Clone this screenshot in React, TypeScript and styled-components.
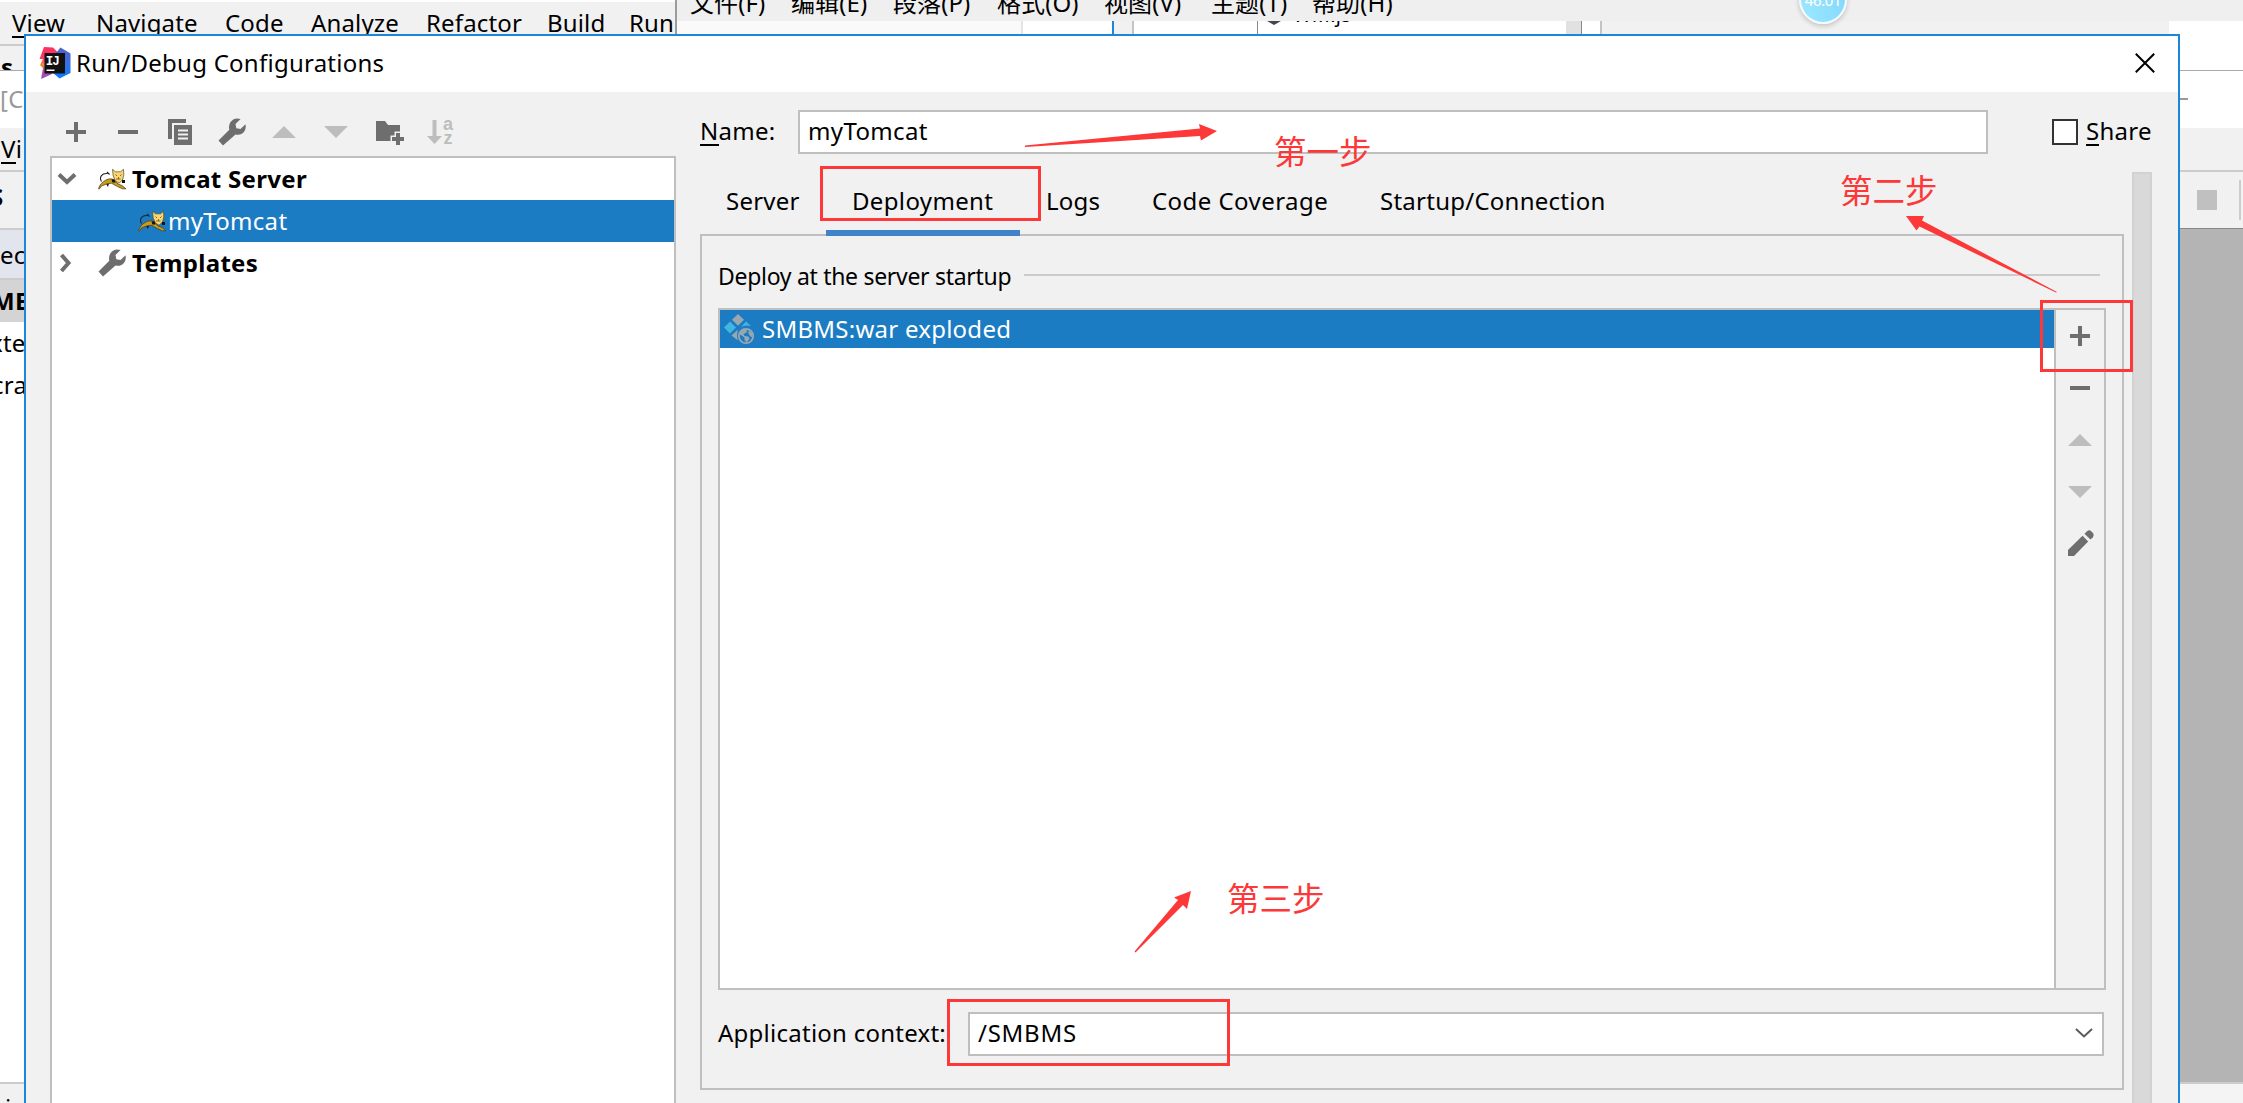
import React from "react";
import styled, { createGlobalStyle, css } from "styled-components";

const C = {
  panel: "#f1f1f1",
  line: "#bfbfbf",
  blue: "#1b7cc4",
  accent: "#1e86d8",
  icon: "#6e6e6e",
  off: "#bdbdbd",
  red: "#fc3838",
};

const GlobalStyle = createGlobalStyle`
  html, body { margin: 0; height: 1103px; overflow: hidden; background: #fff; }
  *, *::before, *::after { box-sizing: border-box; }
  body { font: 24px/32px "Noto Sans", "Open Sans", "Noto Sans CJK SC", sans-serif; letter-spacing: 0.25px; color: #000; }
  svg { display: block; flex: none; overflow: visible; }
`;

const Desktop = styled.div`
  position: relative;
  width: 2243px;
  height: 1103px;
  overflow: hidden;
  white-space: pre;
`;

/* ---------- windows behind the dialog ---------- */

const IdeWindow = styled.div`
  display: flex;
  flex-direction: column;
  height: 1103px;
  border-top: 2px solid #fff;
  background: ${C.panel};
`;
const IdeMenu = styled.nav`
  display: grid;
  grid-template-columns: 84px 129px 86px 115px 121px 82px 60px;
  padding-left: 12px;
  height: 42px;
  flex: none;
  line-height: 41px;
  letter-spacing: 0.15px;
`;
const Under = styled.span`
  border-bottom: 2px solid #000;
  display: inline-block;
  line-height: 27px;
  height: 29px;
  text-indent: 0;
`;
const Backdrop = styled.div`
  display: flex;
  align-items: flex-start;
  justify-content: space-between;
  flex: 1;
`;
const Column = styled.div<{ $w: number; $rise?: number }>`
  display: flex;
  flex-direction: column;
  width: ${(p) => p.$w}px;
  margin-top: ${(p) => -(p.$rise ?? 0)}px;
  overflow: hidden;
`;
const Strip = styled.div<{
  $h: number;
  $bg?: string;
  $top?: string;
  $line?: string;
  $lw?: number;
  $pad?: number;
  $indent?: number;
  $bold?: boolean;
  $color?: string;
}>`
  flex: none;
  overflow: hidden;
  height: ${(p) => p.$h}px;
  background: ${(p) => p.$bg ?? C.panel};
  ${(p) => p.$top && css`border-top: 2px solid ${p.$top};`}
  ${(p) => p.$line && css`border-bottom: ${p.$lw ?? 2}px solid ${p.$line};`}
  padding-top: ${(p) => p.$pad ?? 0}px;
  text-indent: ${(p) => p.$indent ?? 0}px;
  font-weight: ${(p) => (p.$bold ? 700 : 400)};
  color: ${(p) => p.$color ?? "#000"};
`;
const Dash = styled.i`
  display: block;
  width: 8px;
  height: 2px;
  background: #999;
`;
const StopRow = styled.div`
  display: flex;
  align-items: center;
  justify-content: space-between;
  width: 61px;
  height: 40px;
  padding-left: 17px;
  border-right: 2px solid #ccc;
  &::before {
    content: "";
    width: 20px;
    height: 20px;
    background: #c0c0c0;
  }
`;

const Editor = styled.section`
  position: absolute;
  left: 675px;
  top: 0;
  width: 1568px;
  height: 34px;
  border-left: 2px solid #9c9c9c;
  display: flex;
  flex-direction: column;
`;
const EditorMenu = styled.nav`
  display: grid;
  grid-template-columns: 101px 102px 104px 107px 107px 101px 100px;
  height: 21px;
  flex: none;
  padding-left: 13px;
  overflow: hidden;
  background: #efefef;
  font-family: "Noto Sans", "Noto Sans CJK SC", sans-serif;
  letter-spacing: 0.1px;
  & > span { height: 32px; line-height: 32px; margin-top: -13px; }
`;
const Fragments = styled.div`
  display: flex;
  height: 13px;
  overflow: hidden;
`;
const Fragment = styled.div<{ $w: number; $bg?: string; $edge?: string; $ew?: number }>`
  flex: none;
  width: ${(p) => p.$w}px;
  background: ${(p) => p.$bg ?? "#fff"};
  ${(p) => p.$edge && css`border-right: ${p.$ew ?? 2}px solid ${p.$edge};`}
`;
const FileLabel = styled.div`
  display: flex;
  align-items: flex-start;
  gap: 12px;
  padding-left: 9px;
  font-size: 20px;
  line-height: 20px;
  & > span { margin-top: -16px; }
`;
const Bubble = styled.div`
  position: absolute;
  left: 1799px;
  top: -25px;
  width: 48px;
  height: 49px;
  border: 2px solid #f4fbff;
  border-radius: 50%;
  background: linear-gradient(70deg, #9ce9ff, #83d6fb);
  box-shadow: 0 2px 5px rgba(0, 0, 0, 0.2);
  color: #fff;
  font-size: 15px;
  line-height: 20px;
  text-align: center;
  padding-top: 13px;
  letter-spacing: -0.4px;
`;

/* ---------- dialog ---------- */

const Dialog = styled.main`
  position: absolute;
  left: 24px;
  top: 34px;
  width: 2156px;
  height: 1080px;
  border: 2px solid ${C.accent};
  background: ${C.panel};
  display: flex;
  flex-direction: column;
`;
const TitleBar = styled.header`
  display: flex;
  align-items: center;
  height: 56px;
  flex: none;
  padding: 0 23px 2px 13px;
  background: #fff;
  & > h1 { flex: 1; margin: 0 0 0 5px; font-size: 24px; font-weight: 400; letter-spacing: 0.25px; }
`;
const Body = styled.div`
  display: flex;
  flex: 1;
  min-height: 0;
`;
const Sidebar = styled.aside`
  display: flex;
  flex-direction: column;
  width: 650px;
  padding: 14px 0 0 24px;
`;
const Toolbar = styled.div<{ $vertical?: boolean }>`
  display: flex;
  flex-direction: ${(p) => (p.$vertical ? "column" : "row")};
`;
const Tool = styled.button<{ $off?: boolean; $nudge?: string }>`
  display: flex;
  align-items: center;
  justify-content: center;
  width: 52px;
  height: 52px;
  padding: ${(p) => p.$nudge ?? "0"};
  border: 0;
  background: none;
  color: ${(p) => (p.$off ? C.off : C.icon)};
`;
const Tree = styled.div`
  flex: 1;
  margin-top: -2px;
  border: 2px solid ${C.line};
  background: #fff;
`;
const TreeRow = styled.div<{ $level?: number; $selected?: boolean; $bold?: boolean }>`
  display: flex;
  align-items: center;
  height: 42px;
  padding-left: ${(p) => (p.$level ? 86 : 6)}px;
  font-weight: ${(p) => (p.$bold ? 700 : 400)};
  letter-spacing: 0.3px;
  color: ${(p) => (p.$selected ? "#fff" : "#000")};
  background: ${(p) => (p.$selected ? C.blue : "transparent")};
`;
const Twisty = styled.span`
  display: flex;
  width: 40px;
  color: ${C.icon};
`;
const RowIcon = styled.span<{ $gap: number }>`
  display: flex;
  width: ${(p) => 28 + p.$gap}px;
  color: ${C.icon};
`;

const Content = styled.section`
  flex: 1;
  display: flex;
  flex-direction: column;
  padding: 18px 26px 0 24px;
`;
const NameRow = styled.div`
  display: flex;
  align-items: center;
  height: 44px;
`;
const Label = styled.label<{ $w?: number }>`
  width: ${(p) => (p.$w ? `${p.$w}px` : "auto")};
  margin-top: -3px;
`;
const Field = styled.div<{ $w: number; $track?: number }>`
  display: flex;
  align-items: center;
  justify-content: space-between;
  width: ${(p) => p.$w}px;
  height: 44px;
  padding: 0 9px 2px 8px;
  border: 2px solid ${C.line};
  background: #fff;
  letter-spacing: ${(p) => p.$track ?? 0.35}px;
`;
const Check = styled.span`
  width: 26px;
  height: 26px;
  margin: 0 8px 0 64px;
  border: 2px solid #333;
  background: #fff;
`;
const Scroller = styled.div`
  display: flex;
  align-items: flex-start;
  justify-content: space-between;
  margin-top: 18px;
  flex: 1;
`;
const ScrollBar = styled.div`
  width: 20px;
  height: 100%;
  border: 2px solid #d2d2d2;
  background: #d9d9d9;
`;
const Page = styled.div`
  width: 1424px;
`;
const Tabs = styled.div`
  display: flex;
  height: 64px;
`;
const Tab = styled.div<{ $w: number; $active?: boolean; $track?: number }>`
  width: ${(p) => p.$w}px;
  padding: 13px 0 0 26px;
  height: 64px;
  border-bottom: ${(p) => (p.$active ? "6px solid #4083c9" : "0")};
  letter-spacing: ${(p) => p.$track ?? 0.25}px;
  position: relative;
  z-index: 1;
`;
const Pane = styled.div`
  height: 856px;
  margin-top: -2px;
  padding: 23px 16px 0 16px;
  border: 2px solid ${C.line};
`;
const Legend = styled.div`
  display: flex;
  align-items: center;
  height: 32px;
  gap: 12px;
  &::after {
    content: "";
    flex: 1;
    height: 2px;
    margin: 0 6px 0 0;
    background: #cbcbcb;
  }
`;
const LegendText = styled.span`
  width: 294px;
  margin-top: 2px;
  font-size: 23px;
  letter-spacing: -0.3px;
`;
const ListBox = styled.div`
  display: flex;
  height: 682px;
  margin-top: 17px;
  border: 2px solid ${C.line};
`;
const List = styled.div`
  flex: 1;
  border-right: 2px solid ${C.line};
  background: #fff;
`;
const Artifact = styled.div`
  display: flex;
  align-items: center;
  gap: 8px;
  height: 38px;
  padding-left: 4px;
  background: ${C.blue};
  color: #fff;
`;
const Side = styled.div`
  width: 48px;
  display: flex;
  justify-content: center;
`;
const ContextRow = styled.div`
  display: flex;
  align-items: center;
  margin-top: 22px;
`;

/* ---------- annotations ---------- */

const Frame = styled.div<{ $x: number; $y: number; $w: number; $h: number }>`
  position: absolute;
  left: ${(p) => p.$x}px;
  top: ${(p) => p.$y}px;
  width: ${(p) => p.$w}px;
  height: ${(p) => p.$h}px;
  border: 3px solid ${C.red};
`;
const Note = styled.div<{ $x: number; $y: number }>`
  position: absolute;
  left: ${(p) => p.$x}px;
  top: ${(p) => p.$y}px;
  font: 32.5px/40px "Noto Sans CJK SC", sans-serif;
  letter-spacing: 0;
  color: ${C.red};
`;
const Arrows = styled.svg`
  position: absolute;
  left: 0;
  top: 0;
`;

/* ---------- icons ---------- */

const Plus = () => (
  <svg width="20" height="20" fill="currentColor"><path d="M8 0h4v8h8v4h-8v8H8v-8H0V8h8z" /></svg>
);
const Minus = () => (
  <svg width="20" height="4" fill="currentColor"><path d="M0 0h20v4H0z" /></svg>
);
const Up = () => (
  <svg width="24" height="12" fill="currentColor"><path d="M0 12 12 0l12 12z" /></svg>
);
const Down = () => (
  <svg width="24" height="12" fill="currentColor"><path d="M0 0h24L12 12z" /></svg>
);
const Copy = () => (
  <svg width="24" height="26" fill="currentColor">
    <path d="M0 0h18v4H4v16H0z" />
    <path fillRule="evenodd" d="M6 6h18v20H6zM10 10.5v2h10v-2zM10 14.5v2h10v-2zM10 18.5v2h10v-2z" />
  </svg>
);
const Wrench = () => (
  <svg width="28" height="28" fill="currentColor">
    <path d="M.5 22.5 11.3 11.8C10 6 13.5.8 19 .5q2 0 3.6.6L17.5 6l.8 4.2 4.2.8 5-4.800c1.500 6.300-3.500 12-10 10.300L5 27.500z" />
  </svg>
);
const FolderPlus = () => (
  <svg width="28" height="24" fill="currentColor">
    <path d="M0 0h9l3 4h12v6.500h-5.500V14.500h-4V20H0z" />
    <path d="M20 12h4v4h4v4h-4v4h-4v-4h-4v-4h4z" />
  </svg>
);
const SortAz = () => (
  <svg width="26" height="26" fill="currentColor">
    <path d="M5.500 1h4v16h5.500L7.500 25 0 17h5.500z" />
    <text x="16" y="10.500" fontSize="18" fontWeight="700" letterSpacing="0">a</text>
    <text x="16.500" y="25" fontSize="18" fontWeight="700" letterSpacing="0">z</text>
  </svg>
);
const Pencil = () => (
  <svg width="26" height="26" fill="currentColor">
    <path d="M0 20 14.500 5.800l5.700 5.700L6 26H0z" />
    <path d="m16.500 3.800 2.600-2.600q2-1.800 4 0l2 2q1.600 2-.2 4l-2.500 2.300z" />
  </svg>
);
const ChevronDown = () => (
  <svg width="18" height="12" fill="none" stroke="currentColor" strokeWidth="4"><path d="m1 1.500 8 7.500 8-7.500" /></svg>
);
const ChevronRight = () => (
  <svg width="12" height="18" fill="none" stroke="currentColor" strokeWidth="4"><path d="m3.500 1 7 8-7 8" /></svg>
);
const ComboArrow = () => (
  <svg width="18" height="10" fill="none" stroke="#5a5a5a" strokeWidth="2"><path d="m1 1 8 7.500L17 1" /></svg>
);
const Close = () => (
  <svg width="20" height="20" fill="none" stroke="#000" strokeWidth="2"><path d="m.8.800 18.400 18.400M19.200.8.800 19.200" /></svg>
);
const Cat = () => (
  <svg width="28" height="20">
    <path d="M3.500 12.500C.8 8 4 4 9.500 4.500M9 3l2.500 2.500" fill="none" stroke="#222" strokeWidth="1.100" />
    <path d="M7 13l3 5 1.500-5.500z" fill="#111" />
    <path d="M.5 19.800c1-3.800 3.500-6.800 7.500-8.800 2.500-1.300 5-1.500 8-.5l4 4.500 4 1.500 4 3.300h-3.500l-5-2.200-6-3.400-5 .8-5 2-2 2.800z" fill="#c99a1d" stroke="#4b3a10" strokeWidth=".7" />
    <path d="M14.500.3l3 2.500h5l3-2.500.3 5.700-1.300 5-3.500 3.200-3.500-2.200-2.300-5z" fill="#f7d774" stroke="#5a4720" strokeWidth=".7" />
    <path d="M17.500 5.500l1.500 1.500M23.500 5.500 22 7M18 10h4.500M20.500 8v2" stroke="#7a5b20" strokeWidth=".9" />
    <path d="M13.500 10.500h3l1 3h-3zM24 11h3v3h-3z" fill="#111" />
  </svg>
);
const IdeaLogo = () => (
  <svg width="32" height="32">
    <defs>
      <linearGradient id="warm" x1="0" y1="0" x2="0" y2="1">
        <stop offset="0" stopColor="#fe2d63" /><stop offset=".38" stopColor="#fb3c64" />
        <stop offset=".55" stopColor="#f28a2e" /><stop offset=".75" stopColor="#a552a8" /><stop offset="1" stopColor="#9a4fb5" />
      </linearGradient>
      <linearGradient id="cool" x1="0" y1="0" x2="0" y2="1">
        <stop offset="0" stopColor="#5560c9" /><stop offset=".5" stopColor="#3b6fe0" /><stop offset="1" stopColor="#087cff" />
      </linearGradient>
    </defs>
    <path d="M5 0l9 .5 6 6v14l-8 7L2 32l2-11L1 18l3-6L.5 12z" fill="url(#warm)" />
    <path d="M21.500.5 31.500 6.500V26l-11 5.500L14 26 17 6z" fill="url(#cool)" />
    <path d="M5.500 6h20.500v20.500H5.500z" fill="#111" />
    <text x="6.800" y="18" fontSize="12.500" fontWeight="700" fill="#fff" fontFamily="Liberation Mono" letterSpacing="-1">IJ</text>
    <path d="M7.500 22.500h8V24h-8z" fill="#fff" />
  </svg>
);
const Exploded = () => (
  <svg width="30" height="30">
    <path d="m14 0 6 5.800-6 6-6-6z" fill="#9aa7b0" />
    <path d="m6 7.500 6 6-6 6-6-6z" fill="#40b6e0" />
    <path d="m22 7.500 5 4.500q-6-1.500-10 1z" fill="#40b6e0" />
    <path d="M14 15.500q-2 6 0 11l-6.500-5z" fill="#9aa7b0" />
    <circle cx="22" cy="22" r="7.200" fill="none" stroke="#9aa7b0" strokeWidth="1.800" />
    <path d="M16 18.500q3-3.500 7-3l-.5 3-3 1.500 1 2 4 .5 1 2.500-3 3.500-2-2.500v-2.500L16 20.500zM24.500 16.500l4 3v4l-2-1-2-3z" fill="#9aa7b0" />
  </svg>
);

export default function App() {
  return (
    <>
      <GlobalStyle />
      <Desktop>
        <IdeWindow>
          <IdeMenu>
            <span><Under>V</Under>iew</span>
            <span>Navigate</span>
            <span>Code</span>
            <span>Analyze</span>
            <span>Refactor</span>
            <span>Build</span>
            <span>Run</span>
          </IdeMenu>
          <Backdrop>
            <Column $w={24}>
              <Strip $h={27} $top="#ccc" $line="#aaa" $lw={1} $bold $pad={5} $indent={1}>s</Strip>
              <Strip $h={57} $bg="#fff" $color="#999" $pad={12}>[C</Strip>
              <Strip $h={44} $line="#ccc" $pad={5} $indent={1}><Under>V</Under>i</Strip>
              <Strip $h={58} $line="#ccc" $bold $pad={9} $indent={-10}>S</Strip>
              <Strip $h={50} $bg="#e2e5ee" $line="#ccc" $pad={9}>ec</Strip>
              <Strip $h={42} $bg="#d4d4d4" $bold $pad={5} $indent={-8}>ME</Strip>
              <Strip $h={42} $bg="#fff" $pad={5} $indent={-10}>xte</Strip>
              <Strip $h={720} $bg="#fff" $line="#ccc" $pad={5} $indent={-8}>cra</Strip>
              <Strip $h={30} $pad={8} $indent={5}>i</Strip>
            </Column>
            <Column $w={63} $rise={10}>
              <Strip $h={37} $bg="#fff" $line="#aaa" $lw={1} />
              <Strip $h={57} $bg="#fff" $pad={27}><Dash /></Strip>
              <Strip $h={44} $line="#ccc" />
              <Strip $h={57} $line="#888" $lw={1} $pad={8}><StopRow /></Strip>
              <Strip $h={855} $bg="#b4b4b4" $line="#ccc" />
              <Strip $h={30} $bg="#f4f4f4" />
            </Column>
          </Backdrop>
        </IdeWindow>

        <Editor>
          <EditorMenu>
            <span>文件(F)</span>
            <span>编辑(E)</span>
            <span>段落(P)</span>
            <span>格式(O)</span>
            <span>视图(V)</span>
            <span>主题(T)</span>
            <span>帮助(H)</span>
          </EditorMenu>
          <Fragments>
            <Fragment $w={346} $bg="#fafafa" $edge="#e4e4e4" />
            <Fragment $w={91} $edge={C.accent} />
            <Fragment $w={20} $bg={C.panel} $edge="#c4c4c4" />
            <Fragment $w={124} $edge="#888" $ew={1} />
            <Fragment $w={308}>
              <FileLabel>
                <svg width="14" height="4"><path d="M0 0h14L7 4z" fill="#445" /></svg>
                <span>WM.js</span>
              </FileLabel>
            </Fragment>
            <Fragment $w={16} $bg="#e1e1e1" $edge="#888" $ew={1} />
            <Fragment $w={20} $edge="#c4c4c4" />
            <Fragment $w={567} $bg={C.panel} />
            <Fragment $w={75} />
          </Fragments>
        </Editor>
        <Bubble>46.01</Bubble>

        <Dialog>
          <TitleBar>
            <IdeaLogo />
            <h1>Run/Debug Configurations</h1>
            <Close />
          </TitleBar>
          <Body>
            <Sidebar>
              <Toolbar>
                <Tool><Plus /></Tool>
                <Tool><Minus /></Tool>
                <Tool><Copy /></Tool>
                <Tool><Wrench /></Tool>
                <Tool $off><Up /></Tool>
                <Tool $off><Down /></Tool>
                <Tool $nudge="2px 0 0 3px"><FolderPlus /></Tool>
                <Tool $off><SortAz /></Tool>
              </Toolbar>
              <Tree>
                <TreeRow $bold>
                  <Twisty><ChevronDown /></Twisty>
                  <RowIcon $gap={6}><Cat /></RowIcon>
                  Tomcat Server
                </TreeRow>
                <TreeRow $level={1} $selected>
                  <RowIcon $gap={2}><Cat /></RowIcon>
                  myTomcat
                </TreeRow>
                <TreeRow $bold>
                  <Twisty><ChevronRight /></Twisty>
                  <RowIcon $gap={6}><Wrench /></RowIcon>
                  Templates
                </TreeRow>
              </Tree>
            </Sidebar>
            <Content>
              <NameRow>
                <Label $w={98}><Under>N</Under>ame:</Label>
                <Field $w={1190}>myTomcat</Field>
                <Check />
                <Label><Under>S</Under>hare</Label>
              </NameRow>
              <Scroller>
                <Page>
                  <Tabs>
                    <Tab $w={126}>Server</Tab>
                    <Tab $w={194} $active $track={0.35}>Deployment</Tab>
                    <Tab $w={106}>Logs</Tab>
                    <Tab $w={228} $track={0.45}>Code Coverage</Tab>
                    <Tab $w={276}>Startup/Connection</Tab>
                  </Tabs>
                  <Pane>
                    <Legend><LegendText>Deploy at the server startup</LegendText></Legend>
                    <ListBox>
                      <List>
                        <Artifact><Exploded />SMBMS:war exploded</Artifact>
                      </List>
                      <Side>
                        <Toolbar $vertical>
                          <Tool><Plus /></Tool>
                          <Tool><Minus /></Tool>
                          <Tool $off><Up /></Tool>
                          <Tool $off><Down /></Tool>
                          <Tool $nudge="0 0 2px 2px"><Pencil /></Tool>
                        </Toolbar>
                      </Side>
                    </ListBox>
                    <ContextRow>
                      <Label $w={250}>Application context:</Label>
                      <Field $w={1136} $track={0.75}>/SMBMS<ComboArrow /></Field>
                    </ContextRow>
                  </Pane>
                </Page>
                <ScrollBar />
              </Scroller>
            </Content>
          </Body>
        </Dialog>

        <Frame $x={820} $y={166} $w={221} $h={55} />
        <Frame $x={2040} $y={300} $w={93} $h={72} />
        <Frame $x={947} $y={999} $w={283} $h={67} />
        <Note $x={1274} $y={130}>第一步</Note>
        <Note $x={1840} $y={169}>第二步</Note>
        <Note $x={1227} $y={877}>第三步</Note>
        <Arrows width="2243" height="1103" fill={C.red}>
          <path d="M1025 145.500 1200 128.500 1199 124 1217 131 1201 140.500 1200 136 1025 147z" />
          <path d="M1906 216h18l-2 4.500 135 71.500-1 .5-136.500-66-3 4z" />
          <path d="M1191 891l-17 6.500 4 2.500-43.500 51.500 1 1L1183 905l4 4z" />
        </Arrows>
      </Desktop>
    </>
  );
}
